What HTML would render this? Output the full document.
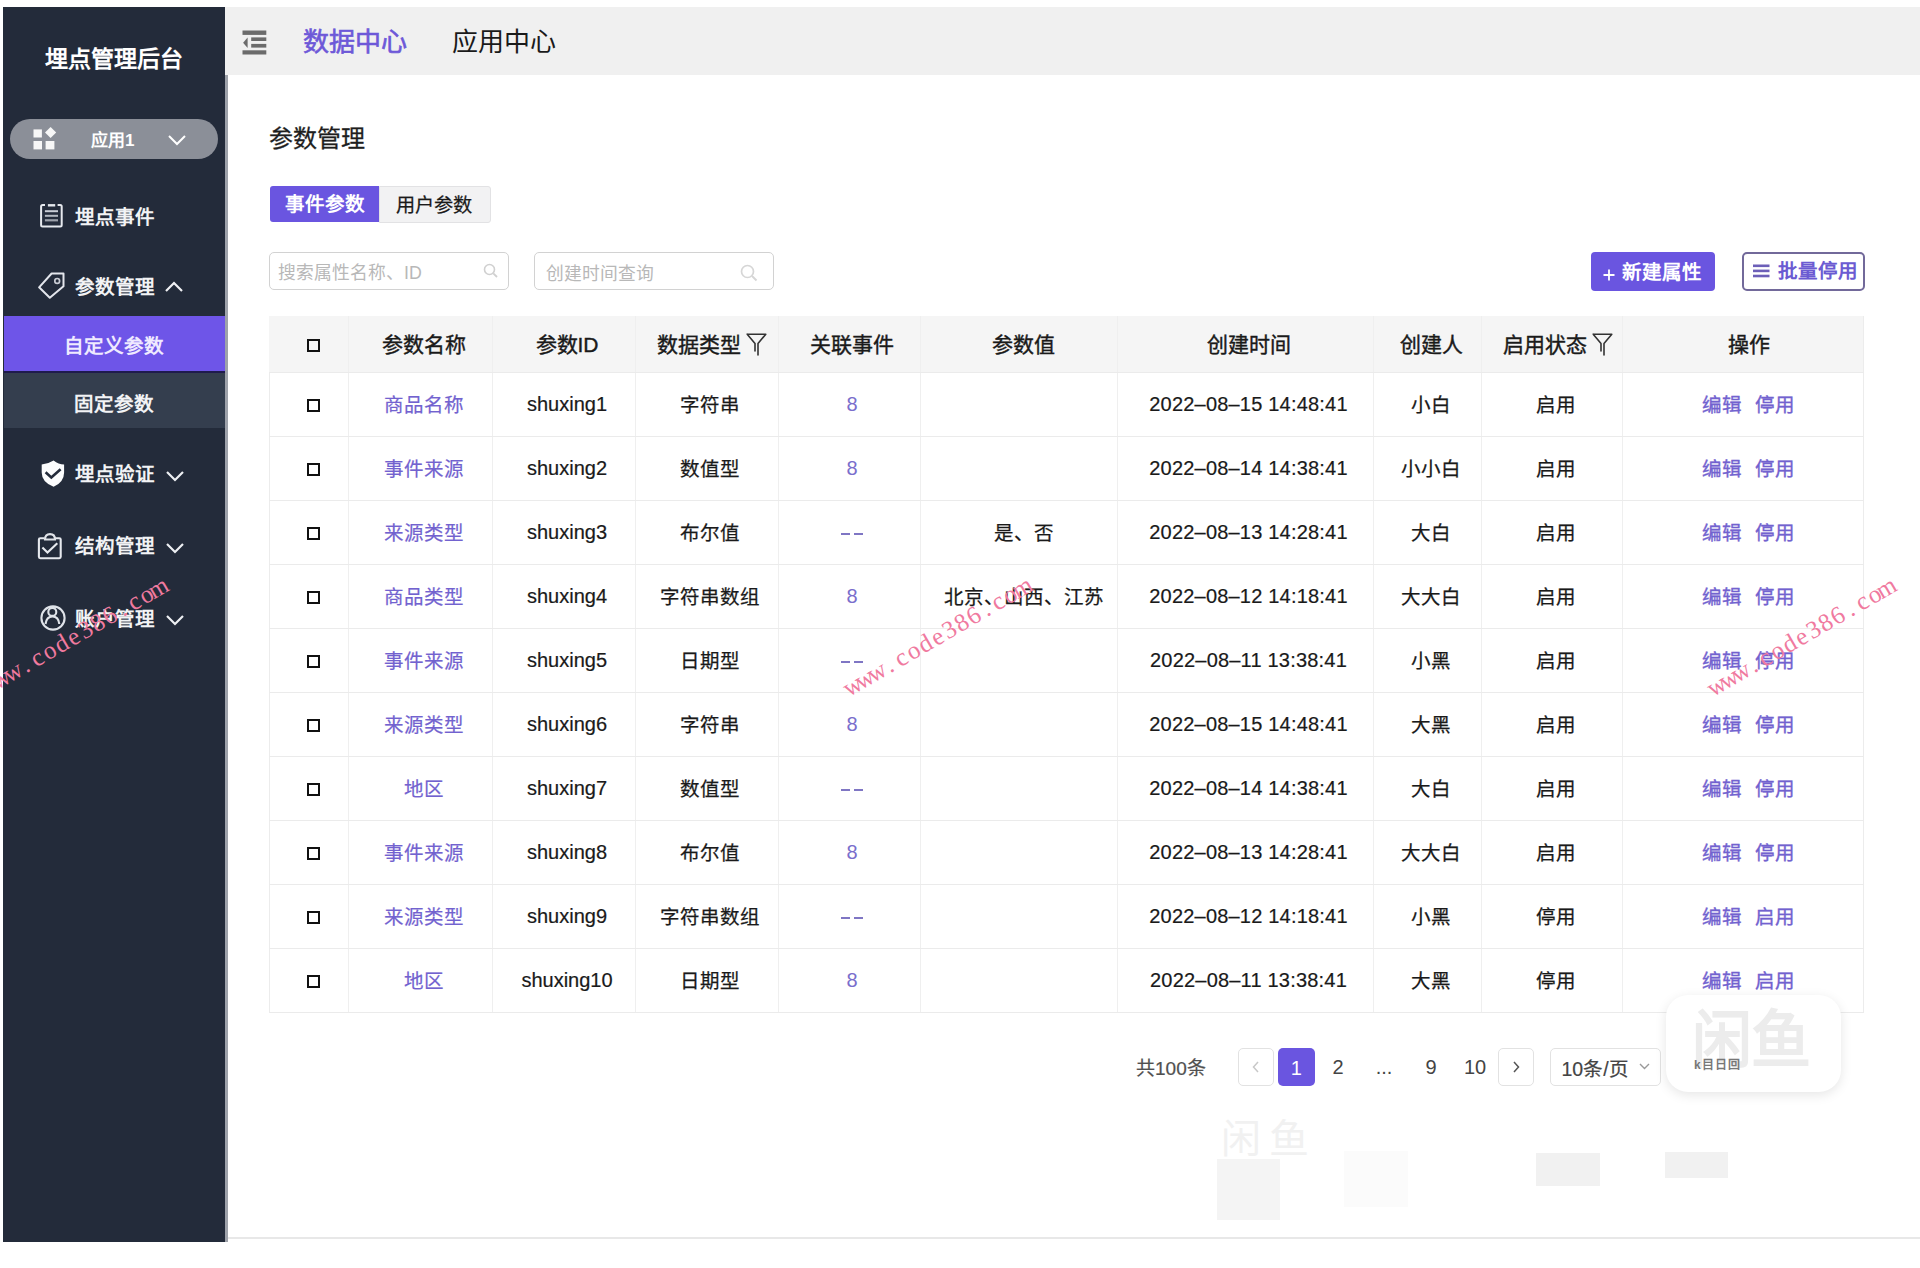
<!DOCTYPE html>
<html lang="zh-CN">
<head>
<meta charset="utf-8">
<style>
*{box-sizing:border-box;margin:0;padding:0}
html,body{width:1920px;height:1268px;overflow:hidden;background:#fff;font-family:"Liberation Sans",sans-serif;color:#222}
.abs{position:absolute}
svg.abs{overflow:visible}
#side{position:absolute;left:3px;top:7px;width:222px;height:1235px;background:#232b3a}
#sidestrip{position:absolute;left:225px;top:73px;width:3px;height:1169px;background:#9ea2aa}
#hdr{position:absolute;left:225px;top:7px;width:1695px;height:68px;background:#f0f0f0}
.t{position:absolute;white-space:nowrap;line-height:1}
.menu{color:#f2f3f5;font-size:19.5px;font-weight:700}
.c{position:absolute;display:flex;align-items:center;justify-content:center;white-space:nowrap;line-height:1}
.dash{display:inline-block;width:9px;height:1.8px;background:#7f76c4;margin:0 2px}
.wm{position:absolute;white-space:nowrap;font-family:"Liberation Serif",serif;color:#ec7396;font-size:26px;letter-spacing:3px;transform-origin:0 0}
</style>
</head>
<body>
<div id="wrap" style="position:absolute;left:0;top:0;width:1920px;height:1268px">
<div id="side"></div>
<div id="sidestrip"></div>
<div id="hdr"></div>

<!-- sidebar -->
<div class="t" style="left:45px;top:47.5px;font-size:23px;font-weight:700;color:#fff">埋点管理后台</div>
<div class="abs" style="left:9.5px;top:119px;width:208.5px;height:40px;border-radius:20px;background:#8b8f98"></div>
<svg class="abs" style="left:33px;top:127px" width="24" height="23" viewBox="0 0 24 23">
 <rect x="0.5" y="2.4" width="8.4" height="8.1" fill="#f7f7f7"/>
 <polygon points="17.6,0 23.2,5.5 17.6,11 12,5.5" fill="#f7f7f7"/>
 <rect x="0.5" y="14" width="8.5" height="8.4" fill="#f7f7f7"/>
 <rect x="12.6" y="14" width="8.8" height="8.4" fill="#f7f7f7"/>
</svg>
<div class="t" style="left:91px;top:132px;font-size:17px;color:#fff;font-weight:700">应用1</div>
<svg class="abs" style="left:168px;top:135px" width="18" height="10" viewBox="0 0 18 10"><path d="M1 1 L9 9 L17 1" fill="none" stroke="#fff" stroke-width="2"/></svg>

<!-- 埋点事件 icon -->
<svg class="abs" style="left:39px;top:203px" width="26" height="26" viewBox="0 0 26 26">
 <path d="M6 2.1 H3.6 Q2.1 2.1 2.1 3.6 V22 Q2.1 23.5 3.6 23.5 H21.2 Q22.7 23.5 22.7 22 V3.6 Q22.7 2.1 21.2 2.1 H18.6" fill="none" stroke="#e6e9ee" stroke-width="2"/>
 <rect x="8.9" y="1.1" width="7.3" height="2.4" fill="#e6e9ee"/>
 <rect x="5.9" y="7.2" width="13.1" height="2" fill="#c9cdd5"/>
 <rect x="5.9" y="11.8" width="13.1" height="2" fill="#b3b8c0"/>
 <rect x="5.9" y="16.2" width="13.1" height="2.2" fill="#9ca1aa"/>
</svg>
<div class="t menu" style="left:75px;top:208px">埋点事件</div>

<!-- 参数管理 tag icon -->
<svg class="abs" style="left:34px;top:268px" width="36" height="36" viewBox="0 0 36 36">
 <path d="M17.6 5.5 H29.5 V18.2 L15.8 29.8 L5.1 19.3 Z" fill="none" stroke="#e3e6ec" stroke-width="2" stroke-linejoin="round"/>
 <circle cx="23.2" cy="12.9" r="2.4" fill="none" stroke="#c9ccd4" stroke-width="1.7"/>
</svg>
<div class="t menu" style="left:75px;top:278px">参数管理</div>
<svg class="abs" style="left:165px;top:281px" width="18" height="11" viewBox="0 0 18 11"><path d="M1 10 L9 2 L17 10" fill="none" stroke="#f0f1f4" stroke-width="2.2"/></svg>

<div class="abs" style="left:4px;top:316px;width:221px;height:55px;background:#6e55e8"></div>
<div class="abs" style="left:4px;top:370.5px;width:221px;height:2.5px;background:#1f1b4d"></div>
<div class="abs" style="left:4px;top:373px;width:221px;height:55px;background:#343e4e"></div>
<div class="t menu" style="left:64px;top:336.5px;color:#efeaff">自定义参数</div>
<div class="t menu" style="left:74px;top:394.5px">固定参数</div>

<!-- 埋点验证 -->
<svg class="abs" style="left:34px;top:455px" width="36" height="36" viewBox="0 0 36 36">
 <path d="M19.6 5.4 Q24.5 9.2 30.1 9.4 V17.5 Q30.1 27.2 19.6 31.8 Q7.7 27.2 7.7 17.5 V9.4 Q13.5 9.2 19.6 5.4 Z" fill="#fbfcfd"/>
 <path d="M11.6 17.3 L17.3 22.4 L26.6 14.2" fill="none" stroke="#232b3a" stroke-width="2.6"/>
</svg>
<div class="t menu" style="left:75px;top:465px">埋点验证</div>
<svg class="abs" style="left:165.5px;top:470.5px" width="18" height="11" viewBox="0 0 18 11"><path d="M1 1 L9 9 L17 1" fill="none" stroke="#eef0f3" stroke-width="2.2"/></svg>

<!-- 结构管理 -->
<svg class="abs" style="left:32px;top:527px" width="36" height="36" viewBox="0 0 36 36">
 <path d="M12.3 11.2 H8.3 Q6.9 11.2 6.9 12.6 V29.8 Q6.9 31.2 8.3 31.2 H27.3 Q28.7 31.2 28.7 29.8 V12.6 Q28.7 11.2 27.3 11.2 H23.2" fill="none" stroke="#e6e9ee" stroke-width="2.1"/>
 <path d="M13 12.5 Q13 7.1 18 7.1 Q23 7.1 23 12.5 Z" fill="none" stroke="#e0e3e8" stroke-width="2.1"/>
 <path d="M10.4 20.5 L15.5 25.6 L25.3 16.3" fill="none" stroke="#e6e9ee" stroke-width="2.1"/>
</svg>
<div class="t menu" style="left:75px;top:537px">结构管理</div>
<svg class="abs" style="left:165.5px;top:542.5px" width="18" height="11" viewBox="0 0 18 11"><path d="M1 1 L9 9 L17 1" fill="none" stroke="#eef0f3" stroke-width="2.2"/></svg>

<!-- 账户管理 -->
<svg class="abs" style="left:34px;top:600px" width="36" height="36" viewBox="0 0 36 36">
 <circle cx="19" cy="18" r="11.6" fill="none" stroke="#dfe3e9" stroke-width="2.1"/>
 <circle cx="18.3" cy="11.9" r="4" fill="none" stroke="#dfe3e9" stroke-width="2.1"/>
 <path d="M11.5 24 Q12.5 16.5 18.5 16.5 Q24.5 16.5 25.3 24" fill="none" stroke="#dfe3e9" stroke-width="2.1"/>
</svg>
<div class="t menu" style="left:75px;top:610px">账户管理</div>
<svg class="abs" style="left:165.5px;top:614.5px" width="18" height="11" viewBox="0 0 18 11"><path d="M1 1 L9 9 L17 1" fill="none" stroke="#eef0f3" stroke-width="2.2"/></svg>

<!-- header -->
<svg class="abs" style="left:242px;top:30px" width="25" height="25" viewBox="0 0 25 25">
 <rect x="0.5" y="0.5" width="23.8" height="4.4" fill="#6b6b6b"/>
 <rect x="9.2" y="7.4" width="15.1" height="3.6" fill="#6b6b6b"/>
 <rect x="9.2" y="13.9" width="15.1" height="3.7" fill="#6b6b6b"/>
 <rect x="0.5" y="20.3" width="23.8" height="4.2" fill="#6b6b6b"/>
 <polygon points="1.1,12.7 5.6,7.6 5.6,17.9" fill="#6b6b6b"/>
</svg>
<div class="t" style="left:303px;top:28.5px;font-size:26px;color:#6d58d8;-webkit-text-stroke:0.6px #6d58d8">数据中心</div>
<div class="t" style="left:451.5px;top:28.5px;font-size:26px;color:#1a1a1a">应用中心</div>

<!-- page title -->
<div class="t" style="left:269px;top:127px;font-size:24px;color:#1e1e1e;-webkit-text-stroke:0.3px #1e1e1e">参数管理</div>

<!-- tabs -->
<div class="abs" style="left:378.5px;top:185.5px;width:112px;height:37px;background:#f2f2f3;border:1px solid #e2e2e4;border-radius:0 3px 3px 0"></div>
<div class="abs" style="left:270px;top:186px;width:109px;height:35.5px;background:#6a55e0;border-radius:3px 0 0 3px"></div>
<div class="t" style="left:285px;top:195px;font-size:19.5px;font-weight:700;color:#fff">事件参数</div>
<div class="t" style="left:396px;top:195.5px;font-size:19.2px;color:#1a1a1a;-webkit-text-stroke:0.25px #1a1a1a">用户参数</div>

<!-- inputs -->
<div class="abs" style="left:268.5px;top:252px;width:240.5px;height:38px;border:1.5px solid #d2d2d2;border-radius:5px"></div>
<div class="t" style="left:278px;top:265px;font-size:17.8px;color:#b8b8b8">搜索属性名称、ID</div>
<svg class="abs" style="left:483px;top:263px" width="16" height="16" viewBox="0 0 16 16"><circle cx="6.5" cy="6.5" r="5" fill="none" stroke="#d0d0d0" stroke-width="1.6"/><path d="M10.3 10.3 L14 14" stroke="#d0d0d0" stroke-width="1.8"/></svg>
<div class="abs" style="left:533.5px;top:252px;width:240px;height:38px;border:1.5px solid #d2d2d2;border-radius:5px"></div>
<div class="t" style="left:546px;top:265.5px;font-size:17.8px;color:#b8b8b8">创建时间查询</div>
<svg class="abs" style="left:740px;top:264px" width="18" height="18" viewBox="0 0 18 18"><circle cx="7.5" cy="7.5" r="6" fill="none" stroke="#d6d6d6" stroke-width="1.7"/><path d="M12 12 L16.5 16.5" stroke="#d6d6d6" stroke-width="2"/></svg>

<!-- buttons -->
<div class="abs" style="left:1591px;top:252px;width:123.5px;height:38.5px;background:#6a55e0;border-radius:4px"></div>
<svg class="abs" style="left:1603px;top:269px" width="12" height="12" viewBox="0 0 12 12"><path d="M6 0.5 V11.5 M0.5 6 H11.5" stroke="#fff" stroke-width="1.8"/></svg>
<div class="t" style="left:1622px;top:263px;font-size:19.5px;font-weight:700;color:#fff">新建属性</div>
<div class="abs" style="left:1741.5px;top:252px;width:123.5px;height:38.5px;border:2px solid #72699a;border-radius:5px"></div>
<svg class="abs" style="left:1752.5px;top:264px" width="17" height="14" viewBox="0 0 17 14"><rect x="0" y="0.5" width="16.5" height="2.6" fill="#6c5fb8"/><rect x="0" y="5.6" width="16.5" height="2.6" fill="#6c5fb8"/><rect x="0" y="10.7" width="16.5" height="2.6" fill="#6c5fb8"/></svg>
<div class="t" style="left:1778px;top:262px;font-size:19.5px;font-weight:700;color:#6b5bd2">批量停用</div>

<div class="abs" style="left:269px;top:316px;width:1595px;height:56px;background:#f5f5f5"></div>
<div class="abs" style="left:348.0px;top:316px;width:1px;height:696px;background:#efefef"></div>
<div class="abs" style="left:491.5px;top:316px;width:1px;height:696px;background:#efefef"></div>
<div class="abs" style="left:634.5px;top:316px;width:1px;height:696px;background:#efefef"></div>
<div class="abs" style="left:777.5px;top:316px;width:1px;height:696px;background:#efefef"></div>
<div class="abs" style="left:920.0px;top:316px;width:1px;height:696px;background:#efefef"></div>
<div class="abs" style="left:1117.0px;top:316px;width:1px;height:696px;background:#efefef"></div>
<div class="abs" style="left:1372.5px;top:316px;width:1px;height:696px;background:#efefef"></div>
<div class="abs" style="left:1480.5px;top:316px;width:1px;height:696px;background:#efefef"></div>
<div class="abs" style="left:1622.0px;top:316px;width:1px;height:696px;background:#efefef"></div>
<div class="abs" style="left:269px;top:372px;width:1px;height:640px;background:#ececec"></div>
<div class="abs" style="left:1863px;top:316px;width:1px;height:696px;background:#ececec"></div>
<div class="abs" style="left:269px;top:372px;width:1595px;height:1px;background:#ebebeb"></div>
<div class="abs" style="left:269px;top:436px;width:1595px;height:1px;background:#ebebeb"></div>
<div class="abs" style="left:269px;top:500px;width:1595px;height:1px;background:#ebebeb"></div>
<div class="abs" style="left:269px;top:564px;width:1595px;height:1px;background:#ebebeb"></div>
<div class="abs" style="left:269px;top:628px;width:1595px;height:1px;background:#ebebeb"></div>
<div class="abs" style="left:269px;top:692px;width:1595px;height:1px;background:#ebebeb"></div>
<div class="abs" style="left:269px;top:756px;width:1595px;height:1px;background:#ebebeb"></div>
<div class="abs" style="left:269px;top:820px;width:1595px;height:1px;background:#ebebeb"></div>
<div class="abs" style="left:269px;top:884px;width:1595px;height:1px;background:#ebebeb"></div>
<div class="abs" style="left:269px;top:948px;width:1595px;height:1px;background:#ebebeb"></div>
<div class="abs" style="left:269px;top:1012px;width:1595px;height:1px;background:#ebebeb"></div>
<div class="abs" style="left:306.5px;top:339.0px;width:13px;height:13px;border:2px solid #111"></div>
<div class="c" style="left:274.0px;top:316px;width:300px;height:56px;font-size:21px;color:#1a1a1a;-webkit-text-stroke:0.4px #1a1a1a">参数名称</div>
<div class="c" style="left:417.0px;top:316px;width:300px;height:56px;font-size:21px;color:#1a1a1a;-webkit-text-stroke:0.4px #1a1a1a">参数ID</div>
<div class="c" style="left:561.5px;top:316px;width:300px;height:56px;font-size:21px;color:#1a1a1a;-webkit-text-stroke:0.4px #1a1a1a">数据类型<svg width="21" height="23" viewBox="0 0 21 23" style="margin-left:5px;vertical-align:-4px"><path d="M1.2 1.2 H19.8 L12 10.5 V22 M9 10.5 L1.2 1.2 M9 10.5 V18" fill="none" stroke="#333" stroke-width="1.6" stroke-linejoin="round" stroke-linecap="round"/></svg></div>
<div class="c" style="left:702.0px;top:316px;width:300px;height:56px;font-size:21px;color:#1a1a1a;-webkit-text-stroke:0.4px #1a1a1a">关联事件</div>
<div class="c" style="left:873.6px;top:316px;width:300px;height:56px;font-size:21px;color:#1a1a1a;-webkit-text-stroke:0.4px #1a1a1a">参数值</div>
<div class="c" style="left:1098.5px;top:316px;width:300px;height:56px;font-size:21px;color:#1a1a1a;-webkit-text-stroke:0.4px #1a1a1a">创建时间</div>
<div class="c" style="left:1281.0px;top:316px;width:300px;height:56px;font-size:21px;color:#1a1a1a;-webkit-text-stroke:0.4px #1a1a1a">创建人</div>
<div class="c" style="left:1408.0px;top:316px;width:300px;height:56px;font-size:21px;color:#1a1a1a;-webkit-text-stroke:0.4px #1a1a1a">启用状态<svg width="21" height="23" viewBox="0 0 21 23" style="margin-left:5px;vertical-align:-4px"><path d="M1.2 1.2 H19.8 L12 10.5 V22 M9 10.5 L1.2 1.2 M9 10.5 V18" fill="none" stroke="#333" stroke-width="1.6" stroke-linejoin="round" stroke-linecap="round"/></svg></div>
<div class="c" style="left:1598.8px;top:316px;width:300px;height:56px;font-size:21px;color:#1a1a1a;-webkit-text-stroke:0.4px #1a1a1a">操作</div>
<div class="abs" style="left:306.5px;top:399.3px;width:13px;height:13px;border:2px solid #111"></div>
<div class="c" style="left:274.0px;top:374px;width:300px;height:64px;color:#7262cf;font-size:19.5px;-webkit-text-stroke:0.2px #7262cf">商品名称</div>
<div class="c" style="left:417.0px;top:372px;width:300px;height:64px;font-size:20px;color:#1a1a1a;-webkit-text-stroke:0.2px #1a1a1a">shuxing1</div>
<div class="c" style="left:560.0px;top:374px;width:300px;height:64px;font-size:19.5px;color:#1a1a1a;-webkit-text-stroke:0.25px #1a1a1a">字符串</div>
<div class="c" style="left:702.0px;top:372px;width:300px;height:64px;font-size:20px;color:#7a6ecc">8</div>
<div class="c" style="left:1098.5px;top:372px;width:300px;height:64px;font-size:20px;color:#1a1a1a;letter-spacing:0.2px;-webkit-text-stroke:0.2px #1a1a1a">2022&ndash;08&ndash;15 14:48:41</div>
<div class="c" style="left:1281.0px;top:374px;width:300px;height:64px;font-size:19.5px;color:#1a1a1a;-webkit-text-stroke:0.25px #1a1a1a">小白</div>
<div class="c" style="left:1406.0px;top:374px;width:300px;height:64px;font-size:19.5px;color:#1a1a1a;-webkit-text-stroke:0.25px #1a1a1a">启用</div>
<div class="c" style="left:1598.8px;top:374px;width:300px;height:64px;font-size:19.5px;color:#7262cf;-webkit-text-stroke:0.35px #7262cf">编辑<span style="display:inline-block;width:13px"></span>停用</div>
<div class="abs" style="left:306.5px;top:463.3px;width:13px;height:13px;border:2px solid #111"></div>
<div class="c" style="left:274.0px;top:438px;width:300px;height:64px;color:#7262cf;font-size:19.5px;-webkit-text-stroke:0.2px #7262cf">事件来源</div>
<div class="c" style="left:417.0px;top:436px;width:300px;height:64px;font-size:20px;color:#1a1a1a;-webkit-text-stroke:0.2px #1a1a1a">shuxing2</div>
<div class="c" style="left:560.0px;top:438px;width:300px;height:64px;font-size:19.5px;color:#1a1a1a;-webkit-text-stroke:0.25px #1a1a1a">数值型</div>
<div class="c" style="left:702.0px;top:436px;width:300px;height:64px;font-size:20px;color:#7a6ecc">8</div>
<div class="c" style="left:1098.5px;top:436px;width:300px;height:64px;font-size:20px;color:#1a1a1a;letter-spacing:0.2px;-webkit-text-stroke:0.2px #1a1a1a">2022&ndash;08&ndash;14 14:38:41</div>
<div class="c" style="left:1281.0px;top:438px;width:300px;height:64px;font-size:19.5px;color:#1a1a1a;-webkit-text-stroke:0.25px #1a1a1a">小小白</div>
<div class="c" style="left:1406.0px;top:438px;width:300px;height:64px;font-size:19.5px;color:#1a1a1a;-webkit-text-stroke:0.25px #1a1a1a">启用</div>
<div class="c" style="left:1598.8px;top:438px;width:300px;height:64px;font-size:19.5px;color:#7262cf;-webkit-text-stroke:0.35px #7262cf">编辑<span style="display:inline-block;width:13px"></span>停用</div>
<div class="abs" style="left:306.5px;top:527.3px;width:13px;height:13px;border:2px solid #111"></div>
<div class="c" style="left:274.0px;top:502px;width:300px;height:64px;color:#7262cf;font-size:19.5px;-webkit-text-stroke:0.2px #7262cf">来源类型</div>
<div class="c" style="left:417.0px;top:500px;width:300px;height:64px;font-size:20px;color:#1a1a1a;-webkit-text-stroke:0.2px #1a1a1a">shuxing3</div>
<div class="c" style="left:560.0px;top:502px;width:300px;height:64px;font-size:19.5px;color:#1a1a1a;-webkit-text-stroke:0.25px #1a1a1a">布尔值</div>
<div class="c" style="left:702.0px;top:502px;width:300px;height:64px;font-size:20px;color:#7a6ecc"><span class="dash"></span><span class="dash"></span></div>
<div class="c" style="left:873.6px;top:502px;width:300px;height:64px;font-size:19.5px;color:#1a1a1a;-webkit-text-stroke:0.25px #1a1a1a">是、否</div>
<div class="c" style="left:1098.5px;top:500px;width:300px;height:64px;font-size:20px;color:#1a1a1a;letter-spacing:0.2px;-webkit-text-stroke:0.2px #1a1a1a">2022&ndash;08&ndash;13 14:28:41</div>
<div class="c" style="left:1281.0px;top:502px;width:300px;height:64px;font-size:19.5px;color:#1a1a1a;-webkit-text-stroke:0.25px #1a1a1a">大白</div>
<div class="c" style="left:1406.0px;top:502px;width:300px;height:64px;font-size:19.5px;color:#1a1a1a;-webkit-text-stroke:0.25px #1a1a1a">启用</div>
<div class="c" style="left:1598.8px;top:502px;width:300px;height:64px;font-size:19.5px;color:#7262cf;-webkit-text-stroke:0.35px #7262cf">编辑<span style="display:inline-block;width:13px"></span>停用</div>
<div class="abs" style="left:306.5px;top:591.3px;width:13px;height:13px;border:2px solid #111"></div>
<div class="c" style="left:274.0px;top:566px;width:300px;height:64px;color:#7262cf;font-size:19.5px;-webkit-text-stroke:0.2px #7262cf">商品类型</div>
<div class="c" style="left:417.0px;top:564px;width:300px;height:64px;font-size:20px;color:#1a1a1a;-webkit-text-stroke:0.2px #1a1a1a">shuxing4</div>
<div class="c" style="left:560.0px;top:566px;width:300px;height:64px;font-size:19.5px;color:#1a1a1a;-webkit-text-stroke:0.25px #1a1a1a">字符串数组</div>
<div class="c" style="left:702.0px;top:564px;width:300px;height:64px;font-size:20px;color:#7a6ecc">8</div>
<div class="c" style="left:873.6px;top:566px;width:300px;height:64px;font-size:19.5px;color:#1a1a1a;-webkit-text-stroke:0.25px #1a1a1a">北京、山西、江苏</div>
<div class="c" style="left:1098.5px;top:564px;width:300px;height:64px;font-size:20px;color:#1a1a1a;letter-spacing:0.2px;-webkit-text-stroke:0.2px #1a1a1a">2022&ndash;08&ndash;12 14:18:41</div>
<div class="c" style="left:1281.0px;top:566px;width:300px;height:64px;font-size:19.5px;color:#1a1a1a;-webkit-text-stroke:0.25px #1a1a1a">大大白</div>
<div class="c" style="left:1406.0px;top:566px;width:300px;height:64px;font-size:19.5px;color:#1a1a1a;-webkit-text-stroke:0.25px #1a1a1a">启用</div>
<div class="c" style="left:1598.8px;top:566px;width:300px;height:64px;font-size:19.5px;color:#7262cf;-webkit-text-stroke:0.35px #7262cf">编辑<span style="display:inline-block;width:13px"></span>停用</div>
<div class="abs" style="left:306.5px;top:655.3px;width:13px;height:13px;border:2px solid #111"></div>
<div class="c" style="left:274.0px;top:630px;width:300px;height:64px;color:#7262cf;font-size:19.5px;-webkit-text-stroke:0.2px #7262cf">事件来源</div>
<div class="c" style="left:417.0px;top:628px;width:300px;height:64px;font-size:20px;color:#1a1a1a;-webkit-text-stroke:0.2px #1a1a1a">shuxing5</div>
<div class="c" style="left:560.0px;top:630px;width:300px;height:64px;font-size:19.5px;color:#1a1a1a;-webkit-text-stroke:0.25px #1a1a1a">日期型</div>
<div class="c" style="left:702.0px;top:630px;width:300px;height:64px;font-size:20px;color:#7a6ecc"><span class="dash"></span><span class="dash"></span></div>
<div class="c" style="left:1098.5px;top:628px;width:300px;height:64px;font-size:20px;color:#1a1a1a;letter-spacing:0.2px;-webkit-text-stroke:0.2px #1a1a1a">2022&ndash;08&ndash;11 13:38:41</div>
<div class="c" style="left:1281.0px;top:630px;width:300px;height:64px;font-size:19.5px;color:#1a1a1a;-webkit-text-stroke:0.25px #1a1a1a">小黑</div>
<div class="c" style="left:1406.0px;top:630px;width:300px;height:64px;font-size:19.5px;color:#1a1a1a;-webkit-text-stroke:0.25px #1a1a1a">启用</div>
<div class="c" style="left:1598.8px;top:630px;width:300px;height:64px;font-size:19.5px;color:#7262cf;-webkit-text-stroke:0.35px #7262cf">编辑<span style="display:inline-block;width:13px"></span>停用</div>
<div class="abs" style="left:306.5px;top:719.3px;width:13px;height:13px;border:2px solid #111"></div>
<div class="c" style="left:274.0px;top:694px;width:300px;height:64px;color:#7262cf;font-size:19.5px;-webkit-text-stroke:0.2px #7262cf">来源类型</div>
<div class="c" style="left:417.0px;top:692px;width:300px;height:64px;font-size:20px;color:#1a1a1a;-webkit-text-stroke:0.2px #1a1a1a">shuxing6</div>
<div class="c" style="left:560.0px;top:694px;width:300px;height:64px;font-size:19.5px;color:#1a1a1a;-webkit-text-stroke:0.25px #1a1a1a">字符串</div>
<div class="c" style="left:702.0px;top:692px;width:300px;height:64px;font-size:20px;color:#7a6ecc">8</div>
<div class="c" style="left:1098.5px;top:692px;width:300px;height:64px;font-size:20px;color:#1a1a1a;letter-spacing:0.2px;-webkit-text-stroke:0.2px #1a1a1a">2022&ndash;08&ndash;15 14:48:41</div>
<div class="c" style="left:1281.0px;top:694px;width:300px;height:64px;font-size:19.5px;color:#1a1a1a;-webkit-text-stroke:0.25px #1a1a1a">大黑</div>
<div class="c" style="left:1406.0px;top:694px;width:300px;height:64px;font-size:19.5px;color:#1a1a1a;-webkit-text-stroke:0.25px #1a1a1a">启用</div>
<div class="c" style="left:1598.8px;top:694px;width:300px;height:64px;font-size:19.5px;color:#7262cf;-webkit-text-stroke:0.35px #7262cf">编辑<span style="display:inline-block;width:13px"></span>停用</div>
<div class="abs" style="left:306.5px;top:783.3px;width:13px;height:13px;border:2px solid #111"></div>
<div class="c" style="left:274.0px;top:758px;width:300px;height:64px;color:#7262cf;font-size:19.5px;-webkit-text-stroke:0.2px #7262cf">地区</div>
<div class="c" style="left:417.0px;top:756px;width:300px;height:64px;font-size:20px;color:#1a1a1a;-webkit-text-stroke:0.2px #1a1a1a">shuxing7</div>
<div class="c" style="left:560.0px;top:758px;width:300px;height:64px;font-size:19.5px;color:#1a1a1a;-webkit-text-stroke:0.25px #1a1a1a">数值型</div>
<div class="c" style="left:702.0px;top:758px;width:300px;height:64px;font-size:20px;color:#7a6ecc"><span class="dash"></span><span class="dash"></span></div>
<div class="c" style="left:1098.5px;top:756px;width:300px;height:64px;font-size:20px;color:#1a1a1a;letter-spacing:0.2px;-webkit-text-stroke:0.2px #1a1a1a">2022&ndash;08&ndash;14 14:38:41</div>
<div class="c" style="left:1281.0px;top:758px;width:300px;height:64px;font-size:19.5px;color:#1a1a1a;-webkit-text-stroke:0.25px #1a1a1a">大白</div>
<div class="c" style="left:1406.0px;top:758px;width:300px;height:64px;font-size:19.5px;color:#1a1a1a;-webkit-text-stroke:0.25px #1a1a1a">启用</div>
<div class="c" style="left:1598.8px;top:758px;width:300px;height:64px;font-size:19.5px;color:#7262cf;-webkit-text-stroke:0.35px #7262cf">编辑<span style="display:inline-block;width:13px"></span>停用</div>
<div class="abs" style="left:306.5px;top:847.3px;width:13px;height:13px;border:2px solid #111"></div>
<div class="c" style="left:274.0px;top:822px;width:300px;height:64px;color:#7262cf;font-size:19.5px;-webkit-text-stroke:0.2px #7262cf">事件来源</div>
<div class="c" style="left:417.0px;top:820px;width:300px;height:64px;font-size:20px;color:#1a1a1a;-webkit-text-stroke:0.2px #1a1a1a">shuxing8</div>
<div class="c" style="left:560.0px;top:822px;width:300px;height:64px;font-size:19.5px;color:#1a1a1a;-webkit-text-stroke:0.25px #1a1a1a">布尔值</div>
<div class="c" style="left:702.0px;top:820px;width:300px;height:64px;font-size:20px;color:#7a6ecc">8</div>
<div class="c" style="left:1098.5px;top:820px;width:300px;height:64px;font-size:20px;color:#1a1a1a;letter-spacing:0.2px;-webkit-text-stroke:0.2px #1a1a1a">2022&ndash;08&ndash;13 14:28:41</div>
<div class="c" style="left:1281.0px;top:822px;width:300px;height:64px;font-size:19.5px;color:#1a1a1a;-webkit-text-stroke:0.25px #1a1a1a">大大白</div>
<div class="c" style="left:1406.0px;top:822px;width:300px;height:64px;font-size:19.5px;color:#1a1a1a;-webkit-text-stroke:0.25px #1a1a1a">启用</div>
<div class="c" style="left:1598.8px;top:822px;width:300px;height:64px;font-size:19.5px;color:#7262cf;-webkit-text-stroke:0.35px #7262cf">编辑<span style="display:inline-block;width:13px"></span>停用</div>
<div class="abs" style="left:306.5px;top:911.3px;width:13px;height:13px;border:2px solid #111"></div>
<div class="c" style="left:274.0px;top:886px;width:300px;height:64px;color:#7262cf;font-size:19.5px;-webkit-text-stroke:0.2px #7262cf">来源类型</div>
<div class="c" style="left:417.0px;top:884px;width:300px;height:64px;font-size:20px;color:#1a1a1a;-webkit-text-stroke:0.2px #1a1a1a">shuxing9</div>
<div class="c" style="left:560.0px;top:886px;width:300px;height:64px;font-size:19.5px;color:#1a1a1a;-webkit-text-stroke:0.25px #1a1a1a">字符串数组</div>
<div class="c" style="left:702.0px;top:886px;width:300px;height:64px;font-size:20px;color:#7a6ecc"><span class="dash"></span><span class="dash"></span></div>
<div class="c" style="left:1098.5px;top:884px;width:300px;height:64px;font-size:20px;color:#1a1a1a;letter-spacing:0.2px;-webkit-text-stroke:0.2px #1a1a1a">2022&ndash;08&ndash;12 14:18:41</div>
<div class="c" style="left:1281.0px;top:886px;width:300px;height:64px;font-size:19.5px;color:#1a1a1a;-webkit-text-stroke:0.25px #1a1a1a">小黑</div>
<div class="c" style="left:1406.0px;top:886px;width:300px;height:64px;font-size:19.5px;color:#1a1a1a;-webkit-text-stroke:0.25px #1a1a1a">停用</div>
<div class="c" style="left:1598.8px;top:886px;width:300px;height:64px;font-size:19.5px;color:#7262cf;-webkit-text-stroke:0.35px #7262cf">编辑<span style="display:inline-block;width:13px"></span>启用</div>
<div class="abs" style="left:306.5px;top:975.3px;width:13px;height:13px;border:2px solid #111"></div>
<div class="c" style="left:274.0px;top:950px;width:300px;height:64px;color:#7262cf;font-size:19.5px;-webkit-text-stroke:0.2px #7262cf">地区</div>
<div class="c" style="left:417.0px;top:948px;width:300px;height:64px;font-size:20px;color:#1a1a1a;-webkit-text-stroke:0.2px #1a1a1a">shuxing10</div>
<div class="c" style="left:560.0px;top:950px;width:300px;height:64px;font-size:19.5px;color:#1a1a1a;-webkit-text-stroke:0.25px #1a1a1a">日期型</div>
<div class="c" style="left:702.0px;top:948px;width:300px;height:64px;font-size:20px;color:#7a6ecc">8</div>
<div class="c" style="left:1098.5px;top:948px;width:300px;height:64px;font-size:20px;color:#1a1a1a;letter-spacing:0.2px;-webkit-text-stroke:0.2px #1a1a1a">2022&ndash;08&ndash;11 13:38:41</div>
<div class="c" style="left:1281.0px;top:950px;width:300px;height:64px;font-size:19.5px;color:#1a1a1a;-webkit-text-stroke:0.25px #1a1a1a">大黑</div>
<div class="c" style="left:1406.0px;top:950px;width:300px;height:64px;font-size:19.5px;color:#1a1a1a;-webkit-text-stroke:0.25px #1a1a1a">停用</div>
<div class="c" style="left:1598.8px;top:950px;width:300px;height:64px;font-size:19.5px;color:#7262cf;-webkit-text-stroke:0.35px #7262cf">编辑<span style="display:inline-block;width:13px"></span>启用</div>


<!-- pagination -->
<div class="t" style="left:1136px;top:1058.5px;font-size:19px;color:#505050;-webkit-text-stroke:0.2px #505050">共100条</div>
<div class="abs" style="left:1238px;top:1048px;width:36px;height:38px;border:1.2px solid #e2e2e2;border-radius:5px"></div>
<svg class="abs" style="left:1251px;top:1061px" width="10" height="12" viewBox="0 0 10 12"><path d="M7 1 L2.5 6 L7 11" fill="none" stroke="#c8c8c8" stroke-width="1.5"/></svg>
<div class="abs" style="left:1278px;top:1048px;width:36.5px;height:38px;background:#6a55e0;border-radius:5px"></div>
<div class="c" style="left:1278px;top:1048px;width:36.5px;height:38px;font-size:20px;color:#fff;padding-top:2px">1</div>
<div class="c" style="left:1318px;top:1048px;width:40px;height:38px;font-size:20px;color:#444">2</div>
<div class="c" style="left:1364px;top:1048px;width:40px;height:38px;font-size:20px;color:#444">...</div>
<div class="c" style="left:1411px;top:1048px;width:40px;height:38px;font-size:20px;color:#444">9</div>
<div class="c" style="left:1455px;top:1048px;width:40px;height:38px;font-size:20px;color:#444">10</div>
<div class="abs" style="left:1498px;top:1048px;width:36px;height:38px;border:1.2px solid #e2e2e2;border-radius:5px"></div>
<svg class="abs" style="left:1511px;top:1061px" width="10" height="12" viewBox="0 0 10 12"><path d="M3 1 L7.5 6 L3 11" fill="none" stroke="#555" stroke-width="1.5"/></svg>
<div class="abs" style="left:1549.5px;top:1048px;width:111px;height:38px;border:1.2px solid #e2e2e2;border-radius:5px"></div>
<div class="t" style="left:1561.5px;top:1059.5px;font-size:19.5px;color:#444;-webkit-text-stroke:0.2px #444">10条/页</div>
<svg class="abs" style="left:1639px;top:1063px" width="11" height="7" viewBox="0 0 11 7"><path d="M1 1 L5.5 5.5 L10 1" fill="none" stroke="#999" stroke-width="1.4"/></svg>


<!-- faint artifacts -->
<div class="abs" style="left:1216.5px;top:1159px;width:63px;height:61px;background:#f4f4f4"></div>
<div class="abs" style="left:1344px;top:1151px;width:64px;height:56px;background:#fbfbfb"></div>
<div class="abs" style="left:1535.5px;top:1153px;width:64.5px;height:33px;background:#f1f1f1"></div>
<div class="abs" style="left:1664.5px;top:1152px;width:63px;height:26px;background:#f1f1f1"></div>
<div class="t" style="left:1221px;top:1119px;font-size:40px;color:#f1f1f1;letter-spacing:8px">闲鱼</div>
<!-- watermark box -->
<div class="abs" style="left:1666px;top:995px;width:175px;height:97px;border-radius:22px;background:#fff;box-shadow:0 3px 12px rgba(0,0,0,0.10)"></div>
<div class="t" style="left:1692px;top:1010px;font-size:60px;color:#ececec;font-weight:700;letter-spacing:-1px;transform:scaleY(1.05);transform-origin:0 0">闲鱼</div>
<div class="t" style="left:1694px;top:1059px;font-size:12px;color:#777;font-weight:700;letter-spacing:1px">k目日回</div>

<!-- bottom line -->
<div class="abs" style="left:228px;top:1236.5px;width:1692px;height:2px;background:#e8e8e8"></div>


<!-- watermark text -->
<svg class="abs" style="left:0;top:0;overflow:visible" width="1920" height="1268">
 <g font-family="Liberation Serif, serif" font-size="25" fill="#f07a9f" text-anchor="middle">
  <text x="-6.4 7.6 21.6 35.6 49.6 63.6 77.6 91.6 105.6 119.6 133.6 147.6 161.6 175.6 189.6" y="696.3" transform="rotate(-30.1 -13.4 696.3)">www.code386.com</text>
  <text x="857.5 871.5 885.5 899.5 913.5 927.5 941.5 955.5 969.5 983.5 997.5 1011.5 1025.5 1039.5 1053.5" y="696.3" transform="rotate(-30.1 850.5 696.3)">www.code386.com</text>
  <text x="1721.6 1735.6 1749.6 1763.6 1777.6 1791.6 1805.6 1819.6 1833.6 1847.6 1861.6 1875.6 1889.6 1903.6 1917.6" y="696.3" transform="rotate(-30.1 1714.6 696.3)">www.code386.com</text>
 </g>
</svg>
</div>
</body>
</html>
